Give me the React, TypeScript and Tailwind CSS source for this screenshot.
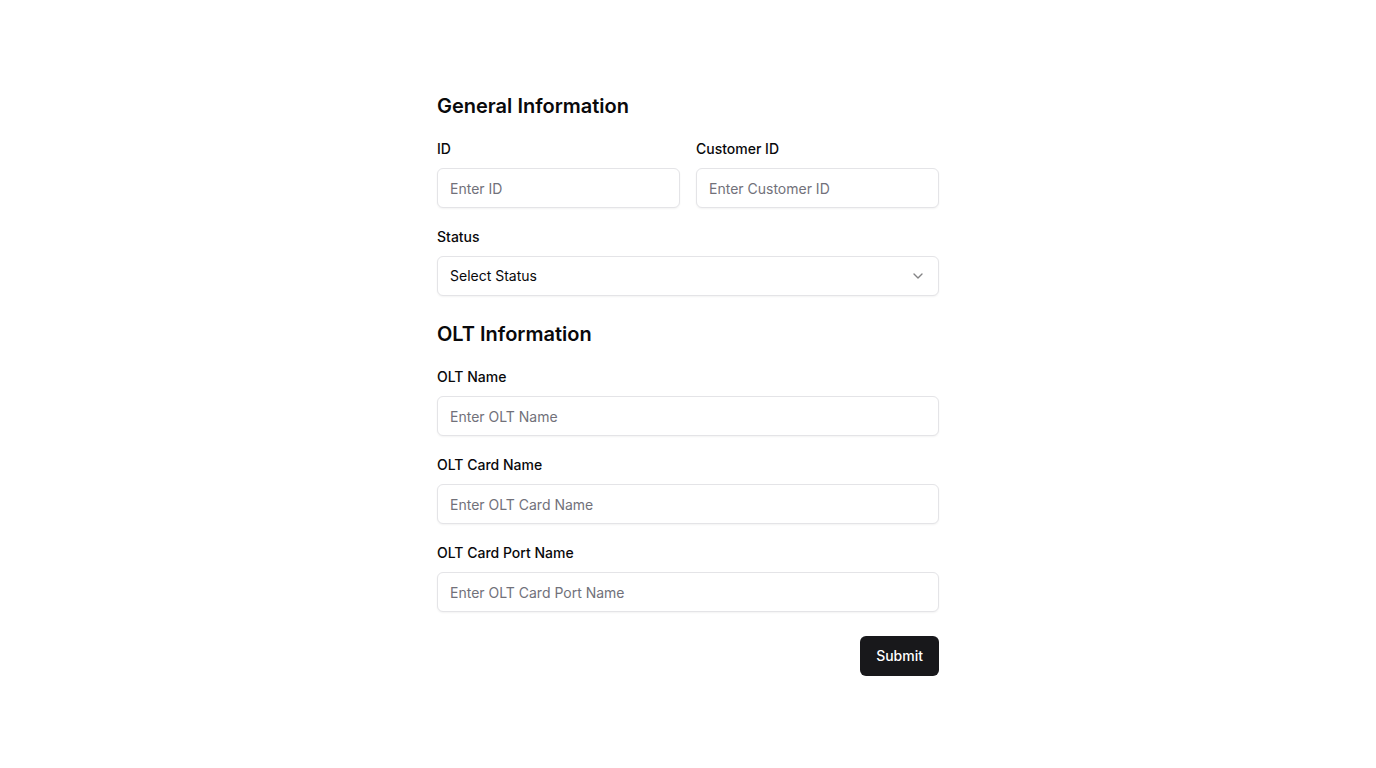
import { ChevronDown } from "lucide-react";

const Field = ({ label, placeholder }: { label: string; placeholder: string }) => (
  <div className="flex flex-col">
    <label className="text-sm font-medium leading-5 text-[#09090b] mb-[9px]">{label}</label>
    <input
      placeholder={placeholder}
      className="h-10 w-full rounded-md border border-[#e4e4e7] bg-white px-3 text-sm text-[#09090b] placeholder:text-[#71717a] shadow-xs outline-none"
    />
  </div>
);

export default function App() {
  return (
    <div
      className="min-h-screen flex items-center justify-center bg-white"
      style={{ fontFamily: "Inter, 'Noto Sans', sans-serif" }}
    >
      <form className="w-[502px] flex flex-col" onSubmit={(e) => e.preventDefault()}>
        {/* General */}
        <div className="flex flex-col gap-[19px]">
          <h2 className="text-xl leading-7 font-semibold text-[#09090b]">General Information</h2>
          <div className="grid grid-cols-2 gap-4">
            <Field label="ID" placeholder="Enter ID" />
            <Field label="Customer ID" placeholder="Enter Customer ID" />
          </div>
          <div className="flex flex-col">
            <label className="text-sm font-medium leading-5 text-[#09090b] mb-[9px]">Status</label>
            <button
              type="button"
              className="h-10 w-full rounded-md border border-[#e4e4e7] bg-white px-3 text-sm text-[#09090b] shadow-xs flex items-center justify-between"
            >
              <span>Select Status</span>
              <ChevronDown className="w-4 h-4 opacity-50" />
            </button>
          </div>
        </div>

        {/* OLT */}
        <div className="flex flex-col gap-[19px] mt-6">
          <h2 className="text-xl leading-7 font-semibold text-[#09090b]">OLT Information</h2>
          <Field label="OLT Name" placeholder="Enter OLT Name" />
          <Field label="OLT Card Name" placeholder="Enter OLT Card Name" />
          <Field label="OLT Card Port Name" placeholder="Enter OLT Card Port Name" />
        </div>

        <div className="flex justify-end mt-6">
          <button
            type="submit"
            className="h-10 px-4 rounded-md bg-[#18181b] text-white text-sm font-medium"
          >
            Submit
          </button>
        </div>
      </form>
    </div>
  );
}
